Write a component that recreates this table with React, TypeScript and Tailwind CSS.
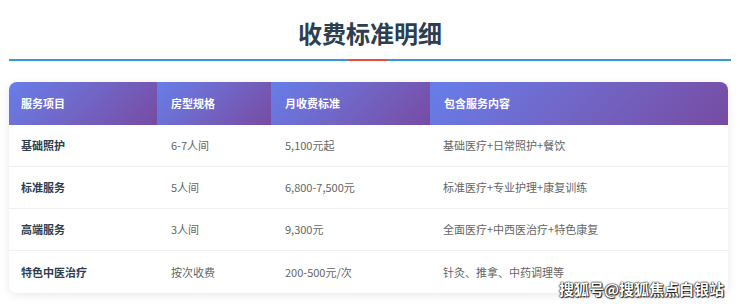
import React from 'react';

const rows = [
  { name: '基础照护', room: '6-7人间', price: '5,100元起', content: '基础医疗+日常照护+餐饮' },
  { name: '标准服务', room: '5人间', price: '6,800-7,500元', content: '标准医疗+专业护理+康复训练' },
  { name: '高端服务', room: '3人间', price: '9,300元', content: '全面医疗+中西医治疗+特色康复' },
  { name: '特色中医治疗', room: '按次收费', price: '200-500元/次', content: '针灸、推拿、中药调理等' },
];

const headers = ['服务项目', '房型规格', '月收费标准', '包含服务内容'];

export default function App() {
  return (
    <div className="relative w-[740px] h-[306px] bg-white overflow-hidden font-['Noto_Sans_CJK_SC','Noto_Sans',sans-serif]">
      {/* Title */}
      <h1 className="pt-[15px] text-center text-[24px] leading-[36px] font-bold text-[#2c3e50]">收费标准明细</h1>

      {/* Divider with accent */}
      <div className="mx-[9px] mt-[8px] h-[2px] bg-[#3498db] flex justify-center">
        <div className="w-[40px] h-[2px] bg-[#e74c3c] -translate-x-[2px]" />
      </div>

      {/* Table */}
      <div className="ml-[9px] mt-[21px] w-[719px] rounded-[8px] bg-white shadow-[0_2px_10px_rgba(0,0,0,0.09)] overflow-hidden">
        <div className="grid grid-cols-[148px_114px_159px_1fr] h-[43px]">
          {headers.map((h, i) => (
            <div
              key={h}
              className={`flex items-center bg-linear-135 from-[#667eea] to-[#764ba2] text-white text-[11px] font-bold ${i === 0 ? 'pl-3' : 'pl-[14px]'}`}
            >
              {h}
            </div>
          ))}
        </div>
        {rows.map((r, idx) => (
          <div
            key={r.name}
            className={`grid grid-cols-[148px_114px_159px_1fr] items-center h-[42px] text-[11px] ${idx < rows.length - 1 ? 'border-b border-[#f0f0f0]' : ''}`}
          >
            <div className="pl-3 font-bold text-[#2c3e50]">{r.name}</div>
            <div className="pl-[14px] text-[#666]">{r.room}</div>
            <div className="pl-[14px] text-[#666]">{r.price}</div>
            <div className="pl-[13px] text-[#666]">{r.content}</div>
          </div>
        ))}
      </div>

      {/* Watermark */}
      <div className="absolute right-[16px] top-[280px] text-[15px] font-bold text-white leading-[18px] [text-shadow:0_0_2px_#000,0_0_1px_#000,1px_1px_1px_#333]">
        搜狐号@搜狐焦点白银站
      </div>
    </div>
  );
}
